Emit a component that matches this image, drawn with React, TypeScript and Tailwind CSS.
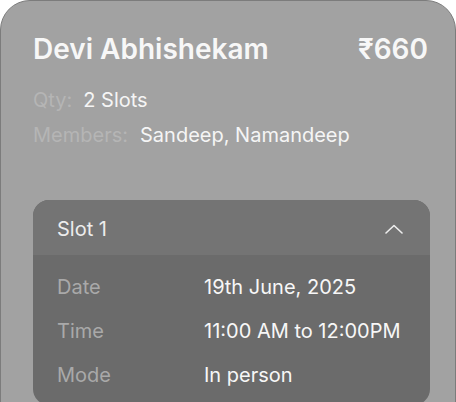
import React from 'react';

const rows = [
  { label: 'Date', value: '19th June, 2025' },
  { label: 'Time', value: '11:00 AM to 12:00PM' },
  { label: 'Mode', value: 'In person' },
];

export default function App() {
  return (
    <div className="w-[456px] h-[402px] bg-white overflow-hidden" style={{ fontFamily: 'Inter, "Noto Sans", sans-serif' }}>
      <div className="h-[430px] bg-[#a2a2a2] border border-[#7c7c7c] rounded-t-[30px] pl-8 pr-[25px] pt-[30px]">
        <div className="flex items-center justify-between">
          <h2 className="text-[28px] leading-9 font-semibold text-[#f7f7f7]">Devi Abhishekam</h2>
          <span className="pr-[2px] text-[28px] leading-9 font-semibold text-[#f7f7f7]">₹660</span>
        </div>

        <div className="mt-[19px] flex items-center gap-[11px] text-[20px] leading-7">
          <span className="text-[#b5b5b5]">Qty:</span>
          <span className="text-[#f5f5f5]">2 Slots</span>
        </div>
        <div className="mt-[7px] flex items-center gap-3 text-[20px] leading-7">
          <span className="text-[#b5b5b5]">Members:</span>
          <span className="text-[#f5f5f5]">Sandeep, Namandeep</span>
        </div>

        <div className="mt-[51px] rounded-2xl overflow-hidden bg-[#6b6b6b]">
          <div className="h-[55px] bg-[#747474] flex items-center justify-between pl-6 pr-[27px] pt-0.5">
            <span className="text-[20px] text-[#ececec]">Slot 1</span>
            <svg width="18" height="10" viewBox="0 0 18 10" fill="none">
              <path d="M1 9L9 1.5L17 9" stroke="#ededed" strokeWidth="1.6" strokeLinecap="round" strokeLinejoin="round" />
            </svg>
          </div>
          <div className="pl-6 pt-[18px] pb-4 flex flex-col gap-4">
            {rows.map((r) => (
              <div key={r.label} className="flex items-center text-[20px] leading-7">
                <span className="w-[147px] text-[#a9a9a9]">{r.label}</span>
                <span className="text-[#f7f7f7]">{r.value}</span>
              </div>
            ))}
          </div>
        </div>
      </div>
    </div>
  );
}
